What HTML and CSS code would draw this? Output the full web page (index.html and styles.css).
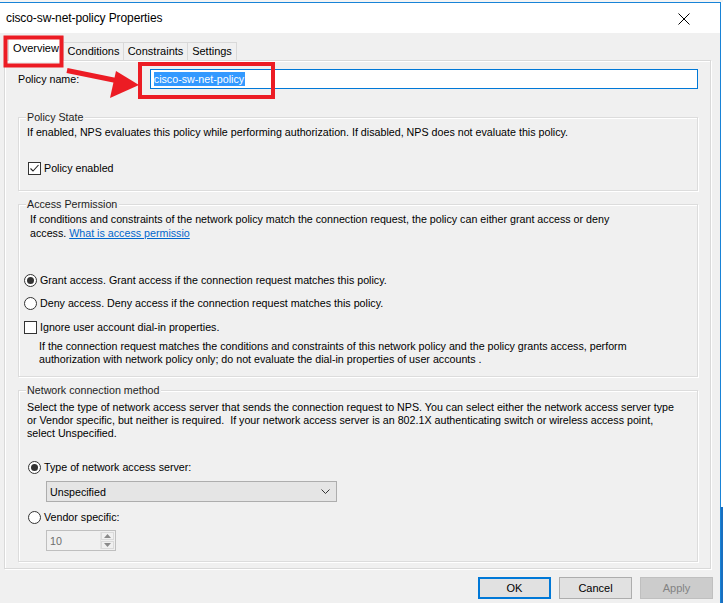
FILE: index.html
```html
<!DOCTYPE html>
<html lang="en">
<head>
  <meta charset="UTF-8">
  <title>cisco-sw-net-policy Properties</title>
  <link rel="stylesheet" href="styles.css">
</head>
<body>
  <div class="behind-top"></div>
  <div class="screen">
    <div class="window">
      <!-- title bar -->
      <div class="titlebar">
        <span class="title">cisco-sw-net-policy Properties</span>
        <svg class="close" width="12" height="12" viewBox="0 0 12 12"><path d="M0.5 0.5 L11.5 11.5 M11.5 0.5 L0.5 11.5" stroke="#000" stroke-width="1" fill="none"/></svg>
      </div>

      <div class="dlg">
        <!-- tabs -->
        <div class="tabs">
          <div class="tab active">Overview</div>
          <div class="tab t-cond">Conditions</div>
          <div class="tab t-cons">Constraints</div>
          <div class="tab t-set">Settings</div>
        </div>

        <div class="panel">
          <div class="name-row">
            <label class="name-label">Policy name:</label>
            <div class="name-input"><span class="sel">cisco-sw-net-policy</span></div>
          </div>

          <div class="group g-state">
            <div class="group-title">Policy State</div>
            <div class="desc d-state">If enabled, NPS evaluates this policy while performing authorization. If disabled, NPS does not evaluate this policy.</div>
            <div class="opt o-enabled"><span class="chk on"><svg width="11" height="11" viewBox="0 0 11 11"><path d="M1.5 5.5 L4 8 L9.5 2" stroke="#222" stroke-width="1.1" fill="none"/></svg></span>Policy enabled</div>
          </div>

          <div class="group g-access">
            <div class="group-title">Access Permission</div>
            <div class="desc d-access"><div class="clip">If conditions and constraints of the network policy match the connection request, the policy can either grant access or deny</div>access. <a class="link" href="#">What is access permissio</a></div>
            <div class="opt o-grant"><span class="radio on"></span>Grant access. Grant access if the connection request matches this policy.</div>
            <div class="opt o-deny"><span class="radio"></span>Deny access. Deny access if the connection request matches this policy.</div>
            <div class="opt o-ignore"><span class="chk"></span>Ignore user account dial-in properties.</div>
            <div class="desc d-ignore">If the connection request matches the conditions and constraints of this network policy and the policy grants access, perform<br>authorization with network policy only; do not evaluate the dial-in properties of user accounts .</div>
          </div>

          <div class="group g-net">
            <div class="group-title">Network connection method</div>
            <div class="desc d-net">Select the type of network access server that sends the connection request to NPS. You can select either the network access server type<br>or Vendor specific, but neither is required.&nbsp; If your network access server is an 802.1X authenticating switch or wireless access point,<br>select Unspecified.</div>
            <div class="opt o-type"><span class="radio on"></span>Type of network access server:</div>
            <div class="combo">
              <span>Unspecified</span>
              <svg width="9" height="6" viewBox="0 0 9 6"><path d="M0.5 0.5 L4.5 4.5 L8.5 0.5" stroke="#333" stroke-width="1" fill="none"/></svg>
            </div>
            <div class="opt o-vendor"><span class="radio"></span>Vendor specific:</div>
            <div class="spin">
              <span class="spin-val">10</span>
              <div class="spin-btns">
                <div class="spin-btn"><svg width="7" height="4" viewBox="0 0 7 4"><path d="M0 4 L3.5 0 L7 4 Z" fill="#8a8a8a"/></svg></div>
                <div class="spin-btn"><svg width="7" height="4" viewBox="0 0 7 4"><path d="M0 0 L3.5 4 L7 0 Z" fill="#8a8a8a"/></svg></div>
              </div>
            </div>
          </div>
        </div>

        <div class="buttons">
          <button class="btn default">OK</button>
          <button class="btn">Cancel</button>
          <button class="btn disabled">Apply</button>
        </div>
      </div>
    </div>
    <div class="behind-right"></div>
  </div>

  <!-- red annotation marks on top of the dialog -->
  <svg class="marks" width="723" height="603" viewBox="0 0 723 603">
    <rect x="5.5" y="37.5" width="56" height="28" fill="none" stroke="#ec1c24" stroke-width="4"/>
    <rect x="140" y="64" width="133" height="33" fill="none" stroke="#ec1c24" stroke-width="4"/>
    <path d="M67 70.5 L116 80.5" stroke="#ec1c24" stroke-width="5" fill="none"/>
    <path d="M116 71 L110 98 L139 85 Z" fill="#ec1c24"/>
  </svg>
</body>
</html>
```

FILE: styles.css
```css
* {
  box-sizing: border-box;
}

body {
  margin: 0;
  width: 723px;
  height: 603px;
  overflow: hidden;
  background: #ffffff;
  font-family: "Liberation Sans", Arial, sans-serif;
  font-size: 10.7px;
  color: #000;
  position: relative;
}

.behind-top {
  height: 2px;
  background: #f4f4f4;
}

.screen {
  display: flex;
  height: 601px;
}

.window {
  width: 721px;
  border-top: 1px solid #1883d7;
  border-right: 1px solid #1883d7;
  display: flex;
  flex-direction: column;
  background: #f0f0f0;
}

.behind-right {
  width: 2px;
  background: linear-gradient(#ffffff 0, #ffffff 505px, #1a6fc0 505px);
}

/* title bar */
.titlebar {
  height: 30px;
  background: #ffffff;
  display: flex;
  align-items: center;
  justify-content: space-between;
  padding: 0 30px 0 6px;
}

.title {
  font-size: 12px;
  color: #000;
  letter-spacing: -0.1px;
}

.close {
  margin-top: 2px;
}

/* tabs */
.tabs {
  height: 27px;
  display: flex;
  align-items: flex-end;
  padding-left: 8px;
}

.tab {
  height: 18px;
  line-height: 17px;
  border: 1px solid #d9d9d9;
  border-bottom: none;
  border-left: none;
  background: #f0f0f0;
  text-align: center;
  font-size: 11px;
}

.tab.active {
  height: 25px;
  width: 56px;
  line-height: 22px;
  background: #ffffff;
  border-left: 1px solid #d9d9d9;
  margin-bottom: -1px;
  position: relative;
  z-index: 1;
}

.t-cond { width: 60px; }
.t-cons { width: 64px; }
.t-set { width: 49px; }

/* tab page */
.panel {
  margin-left: 4px;
  width: 707px;
  height: 509px;
  border: 1px solid #d9d9d9;
  box-shadow: inset 1px 1px 0 #ffffff, 1px 1px 0 #ffffff;
  padding: 8px 12px 0 13px;
}

.name-row {
  display: flex;
  align-items: center;
  height: 20px;
}

.name-label {
  width: 132px;
}

.name-input {
  width: 549px;
  height: 20px;
  border: 1px solid #0078d7;
  background: #ffffff;
  padding: 2px 0 0 3px;
}

.sel {
  background: #3399ff;
  color: #ffffff;
  line-height: 14px;
  display: inline-block;
  padding-right: 1px;
}

/* group boxes */
.group {
  border: 1px solid #dcdcdc;
  box-shadow: inset 1px 1px 0 #ffffff, 1px 1px 0 #ffffff;
  padding: 0 6px 0 5px;
}

.group-title {
  width: fit-content;
  margin: -8px 0 0 2px;
  padding: 0 2px 0 1px;
  background: #f0f0f0;
  line-height: 14px;
  color: #1e1e1e;
}

.desc {
  line-height: 14px;
  color: #000;
  white-space: nowrap;
}

.clip {
  width: 601px;
  overflow: hidden;
}

.opt {
  display: flex;
  align-items: center;
  height: 14px;
  line-height: 14px;
}

.chk {
  width: 13px;
  height: 13px;
  border: 1px solid #333333;
  background: #ffffff;
  margin-right: 3px;
  display: flex;
  align-items: center;
  justify-content: center;
  flex-shrink: 0;
}

.radio {
  width: 13px;
  height: 13px;
  border: 1px solid #333333;
  border-radius: 50%;
  background: #ffffff;
  margin-right: 3px;
  display: flex;
  align-items: center;
  justify-content: center;
  flex-shrink: 0;
}

.radio.on::after {
  content: "";
  width: 7px;
  height: 7px;
  border-radius: 50%;
  background: #333333;
}

.link {
  color: #0066cc;
  text-decoration: underline;
}

/* policy state */
.g-state {
  margin-top: 28px;
  height: 74px;
}

.d-state {
  margin: 1px 0 0 3px;
}

.o-enabled {
  margin: 22px 0 0 4px;
}

/* access permission */
.g-access {
  margin-top: 13px;
  height: 173px;
}

.d-access {
  margin: 1px 0 0 6px;
}

.o-grant {
  margin-top: 33px;
}

.o-deny {
  margin-top: 9px;
}

.o-ignore {
  margin-top: 10px;
}

.d-ignore {
  margin: 6px 0 0 15px;
  line-height: 13px;
}

/* network connection method */
.g-net {
  margin-top: 13px;
  height: 172px;
}

.d-net {
  margin: 4px 0 0 3px;
  line-height: 13px;
}

.o-type {
  margin: 20px 0 0 4px;
}

.combo {
  margin: 7px 0 0 22px;
  width: 291px;
  height: 21px;
  border: 1px solid #adadad;
  background: #e5e5e5;
  display: flex;
  align-items: center;
  justify-content: space-between;
  padding: 0 6px 0 3px;
}

.o-vendor {
  margin: 8px 0 0 4px;
}

.spin {
  margin: 6px 0 0 22px;
  width: 70px;
  height: 21px;
  border: 1px solid #bfbfbf;
  background: #f0f0f0;
  display: flex;
  align-items: center;
  justify-content: space-between;
  padding: 1px 1px 1px 3px;
}

.spin-val {
  color: #6d6d6d;
}

.spin-btns {
  width: 14px;
  height: 17px;
  display: flex;
  flex-direction: column;
  gap: 1px;
  border-left: 1px solid #e3e3e3;
}

.spin-btn {
  flex: 1;
  background: #f0f0f0;
  display: flex;
  align-items: center;
  justify-content: center;
  border: 1px solid #dadada;
}

/* bottom buttons */
.buttons {
  display: flex;
  justify-content: flex-end;
  gap: 8px;
  padding: 8px 7px 0 0;
}

.btn {
  width: 73px;
  height: 22px;
  border: 1px solid #adadad;
  background: #e1e1e1;
  font-family: "Liberation Sans", Arial, sans-serif;
  font-size: 11px;
  color: #000;
  padding: 0;
}

.btn.default {
  border: 2px solid #0078d7;
}

.btn.disabled {
  border-color: #bfbfbf;
  background: #cccccc;
  color: #838383;
}

/* annotation overlay */
.marks {
  position: absolute;
  left: 0;
  top: 0;
  z-index: 2;
  pointer-events: none;
}
```
